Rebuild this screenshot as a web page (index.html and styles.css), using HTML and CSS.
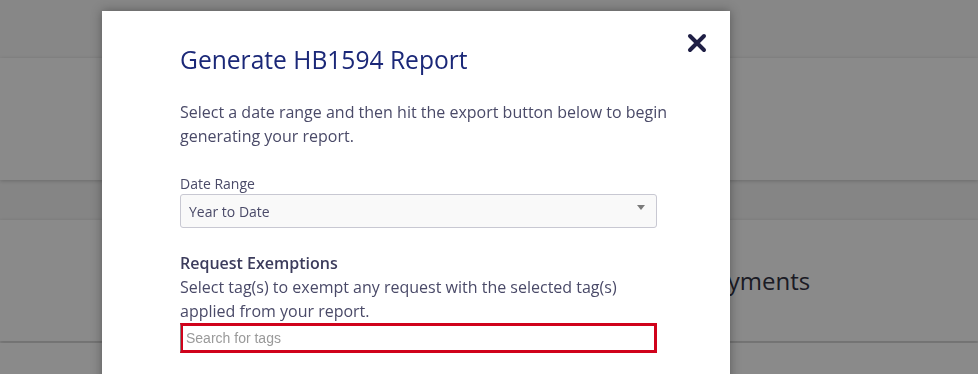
FILE: index.html
```html
<!DOCTYPE html>
<html lang="en">
<head>
<meta charset="utf-8">
<title>Generate HB1594 Report</title>
<link rel="stylesheet" href="styles.css">
</head>
<body>
<div class="page">
  <div class="topbar"></div>
  <div class="card card-a"></div>
  <div class="card card-b"><h2 class="card-title">Payments</h2></div>
  <div class="card card-c"></div>
</div>
<div class="overlay"></div>
<div class="modal">
  <button class="close" aria-label="Close">
    <svg width="20" height="20" viewBox="0 0 20 20"><path d="M3 3 L17 17 M17 3 L3 17" stroke="#1f1f45" stroke-width="4" stroke-linecap="round"/></svg>
  </button>
  <h1 class="title">Generate HB1594 Report</h1>
  <p class="intro">Select a date range and then hit the export button below to begin generating your report.</p>
  <label class="label">Date Range</label>
  <div class="select">
    <span>Year to Date</span>
    <span class="arrow"></span>
  </div>
  <h3 class="sub">Request Exemptions</h3>
  <p class="desc">Select tag(s) to exempt any request with the selected tag(s) applied from your report.</p>
  <div class="search"><span class="placeholder">Search for tags</span></div>
</div>
</body>
</html>
```
FILE: styles.css
```css
html, body {
  margin: 0;
  padding: 0;
  height: 100%;
  overflow: hidden;
}
body {
  background: #f6f6f6;
  font-family: "Open Sans", sans-serif;
}
.page {
  display: flex;
  flex-direction: column;
}
.topbar {
  height: 58px;
  background: #f9f9f9;
  box-shadow: 0 1px 3px rgba(0,0,0,0.25);
}
.card {
  background: #ffffff;
  box-shadow: 0 1px 4px rgba(0,0,0,0.2);
}
.card-a { height: 122px; }
.card-b {
  margin-top: 40px;
  height: 121px;
  display: flex;
  align-items: center;
}
.card-c { margin-top: 2px; height: 60px; }
.card-title {
  margin: 0 0 0 700px;
  font-weight: 400;
  font-size: 24px;
  color: #333344;
}
.overlay {
  position: fixed;
  inset: 0;
  z-index: 10;
  background: rgba(0,0,0,0.46);
}
.modal {
  position: absolute;
  z-index: 20;
  left: 102px;
  top: 11px;
  width: 628px;
  height: 420px;
  background: #fff;
  box-shadow: 0 0 10px rgba(0,0,0,0.35);
  padding: 32px 73px 0 78px;
  box-sizing: border-box;
  color: #4a4a68;
}
.close {
  position: absolute;
  left: 585px;
  top: 22px;
  border: 0;
  background: none;
  padding: 0;
  width: 20px;
  height: 20px;
}
.close svg { display: block; }
.title {
  margin: 0;
  font-size: 24.6px;
  font-weight: 400;
  line-height: 33px;
  color: #1b2878;
}
.intro {
  margin: 24px 0 0;
  width: 492px;
  font-size: 16px;
  line-height: 24px;
}
.label {
  display: block;
  margin-top: 26px;
  font-size: 14px;
  line-height: 20px;
}
.select {
  height: 34px;
  box-sizing: border-box;
  border: 1px solid #c8c8d2;
  border-radius: 3px;
  background: #f9f9f9;
  display: flex;
  align-items: center;
  justify-content: space-between;
  padding: 0 11px 0 8px;
  font-size: 14px;
}
.arrow {
  width: 0;
  height: 0;
  border-left: 4px solid transparent;
  border-right: 4px solid transparent;
  border-top: 5px solid #7a7a7a;
  margin-top: -8px;
}
.sub {
  margin: 23px 0 0;
  font-size: 16px;
  line-height: 24px;
  font-weight: 600;
  color: #3c3c5c;
}
.desc {
  margin: 0;
  font-size: 16px;
  line-height: 24px;
}
.search {
  height: 30px;
  box-sizing: border-box;
  border: 3px solid #d0021b;
  border-left: 1px solid #888;
  box-shadow: inset 2px 0 0 #d0021b;
  display: flex;
  align-items: center;
  padding-left: 5px;
}
.placeholder {
  font-family: "Liberation Sans", Arial, sans-serif;
  font-size: 14px;
  color: #9a9a9a;
}
```
